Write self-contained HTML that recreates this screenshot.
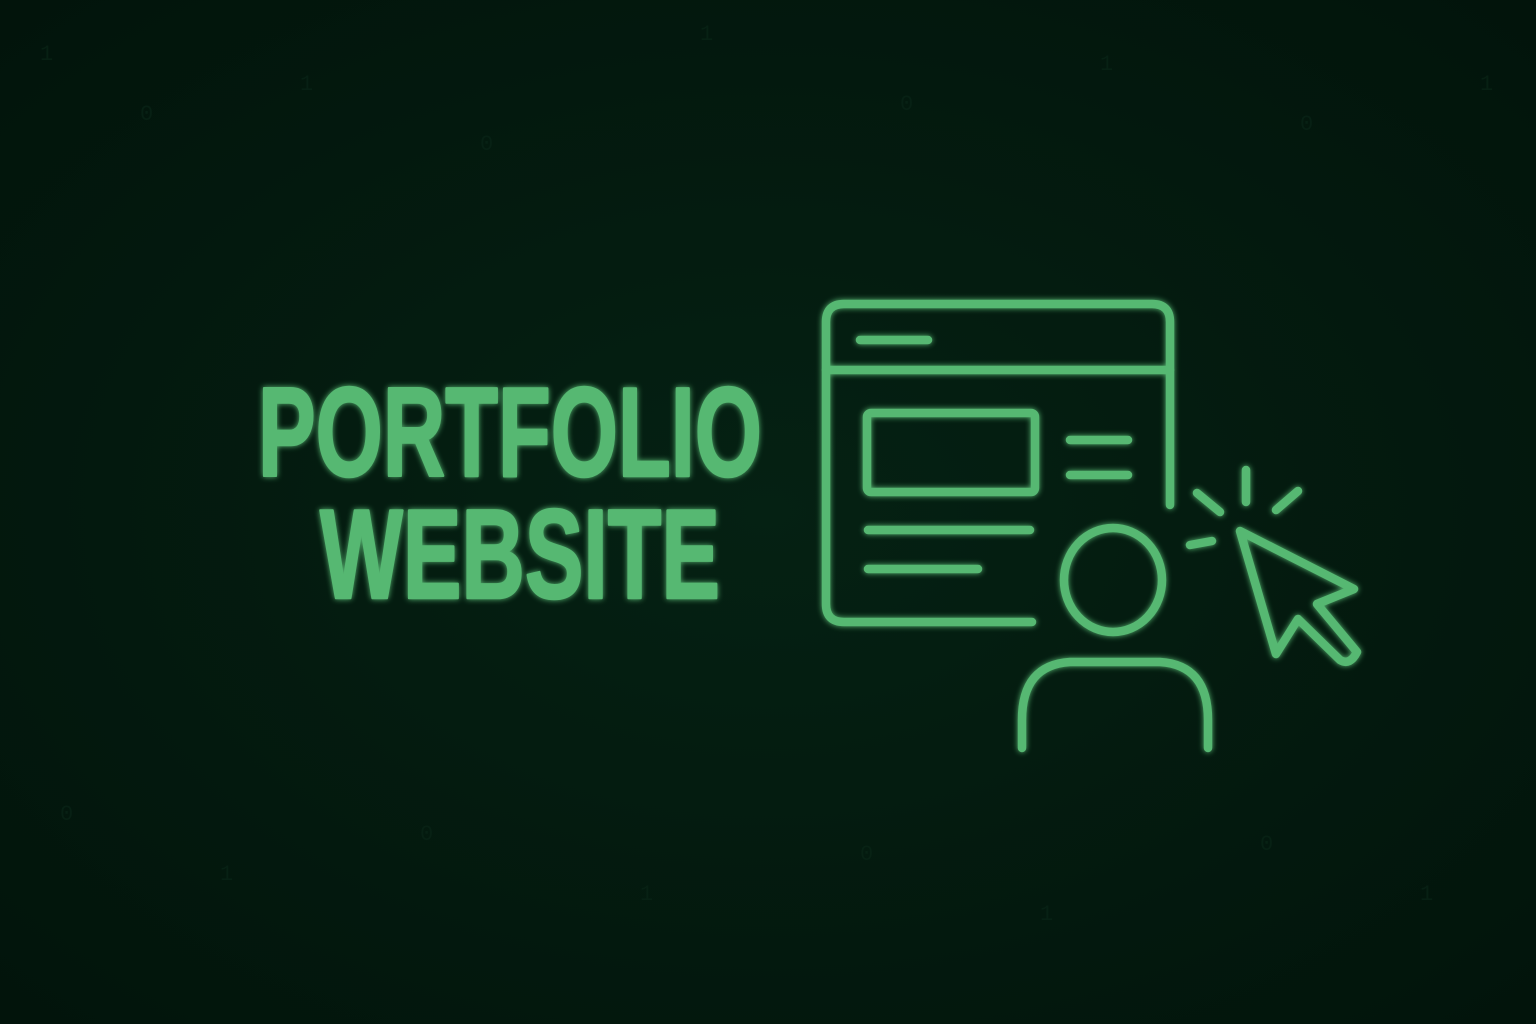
<!DOCTYPE html>
<html><head><meta charset="utf-8"><style>
html,body{margin:0;padding:0;width:1536px;height:1024px;overflow:hidden;background:#03170d}
svg{display:block}
</style></head><body>
<svg width="1536" height="1024" viewBox="0 0 1536 1024" xmlns="http://www.w3.org/2000/svg">
<defs>
<radialGradient id="bg" cx="50%" cy="50%" r="70%">
<stop offset="0" stop-color="#052113"/><stop offset="1" stop-color="#02140b"/>
</radialGradient>
<filter id="glow" x="-20%" y="-20%" width="140%" height="140%">
<feGaussianBlur stdDeviation="3" result="b"/>
<feMerge><feMergeNode in="b"/><feMergeNode in="SourceGraphic"/></feMerge>
</filter>
</defs>
<rect width="1536" height="1024" fill="url(#bg)"/>
<g font-family="Liberation Mono, monospace" font-size="22" fill="#0a2517" opacity="0.7">
<text x="40" y="60">1</text><text x="140" y="120">0</text><text x="300" y="90">1</text><text x="480" y="150">0</text><text x="700" y="40">1</text><text x="900" y="110">0</text><text x="1100" y="70">1</text><text x="1300" y="130">0</text><text x="1480" y="90">1</text>
<text x="60" y="820">0</text><text x="220" y="880">1</text><text x="420" y="840">0</text><text x="640" y="900">1</text><text x="860" y="860">0</text><text x="1040" y="920">1</text><text x="1260" y="850">0</text><text x="1420" y="900">1</text>
</g>
<g fill="#56b872" stroke="#56b872" stroke-width="2.5" stroke-linejoin="round" filter="url(#glow)" font-family="Liberation Sans Narrow, Liberation Sans, sans-serif" font-weight="bold" font-size="127">
<text x="258" y="476" textLength="504" lengthAdjust="spacingAndGlyphs">PORTFOLIO</text>
<text x="320" y="598" textLength="400" lengthAdjust="spacingAndGlyphs">WEBSITE</text>
</g>
<g fill="none" stroke="#56b872" stroke-width="8.5" stroke-linecap="round" stroke-linejoin="round" filter="url(#glow)">
<path d="M1170 505 V322 Q1170 304 1152 304 H844 Q826 304 826 322 V604 Q826 622 844 622 H1032"/>
<path d="M826 370 H1170"/>
<path d="M860 340 H928"/>
<rect x="867" y="413" width="168" height="79" rx="4"/>
<path d="M1070 440 H1128 M1070 475 H1128"/>
<path d="M868 530 H1030 M868 569 H978"/>
<ellipse cx="1113" cy="580" rx="49" ry="52"/>
<path d="M1022 748 V720 Q1022 665 1070 662 H1160 Q1208 665 1208 720 V748"/>
<path d="M1240 531 L1276 654 L1298 619 L1340 660 Q1350 666 1357 652 L1317 604 L1354 589 Z"/>
<path d="M1197 493 L1220 512 M1246 470 V502 M1276 510 L1298 491 M1190 545 L1212 541"/>
</g>
</svg>
</body></html>
